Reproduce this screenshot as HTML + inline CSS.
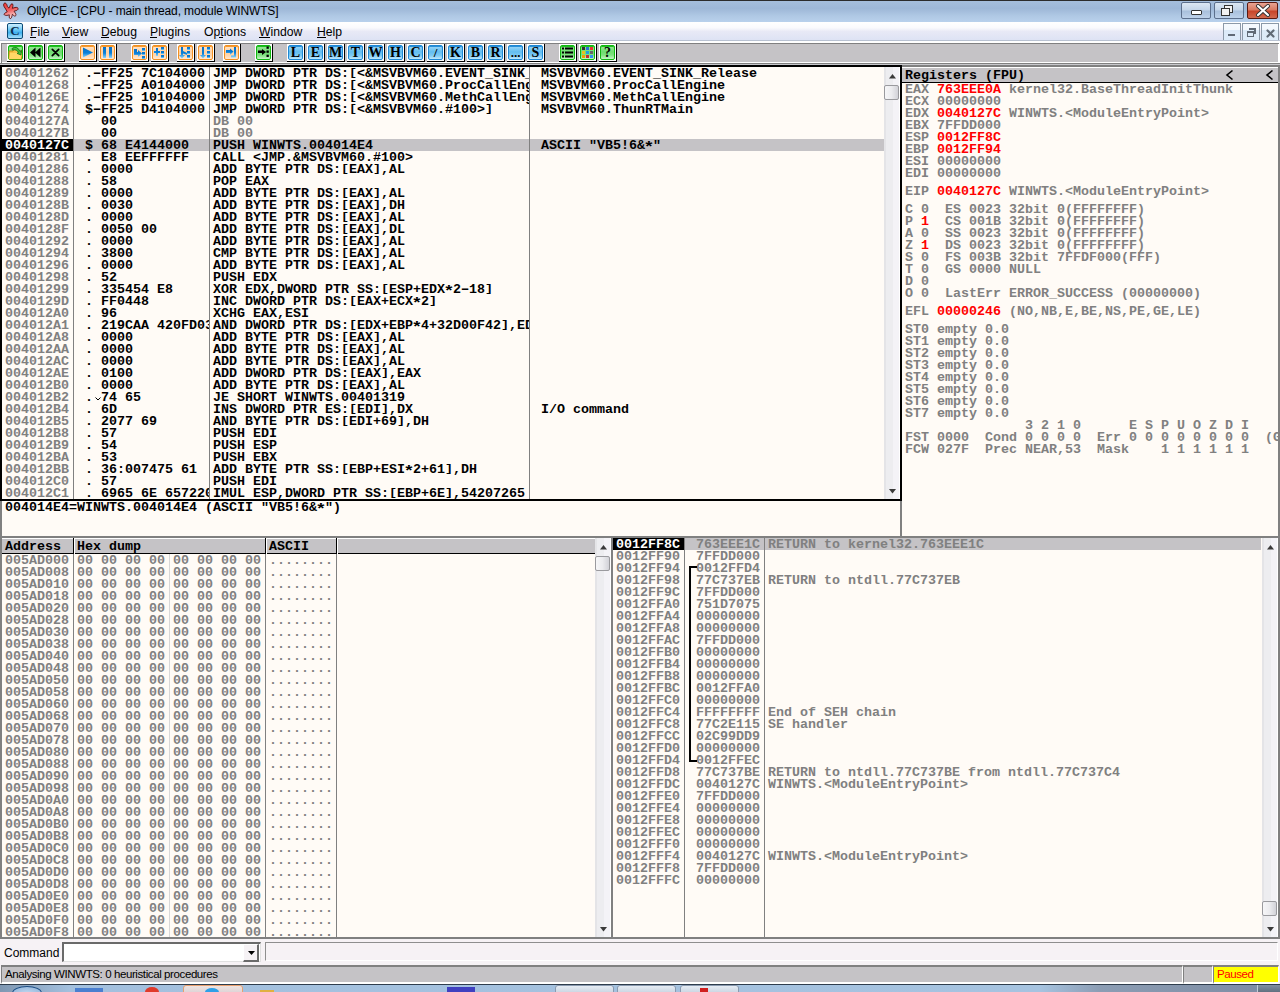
<!DOCTYPE html><html><head><meta charset="utf-8"><style>
*{margin:0;padding:0;box-sizing:border-box}
html,body{width:1280px;height:992px;overflow:hidden;background:#F3F2F7;position:relative}
.a{position:absolute}
.m{font-family:"Liberation Mono",monospace;font-weight:bold;font-size:13.333px;line-height:12px;white-space:pre}
.s{font-family:"Liberation Sans",sans-serif;white-space:pre}
.r{position:absolute;left:0;height:12px;padding-top:1px;margin-left:-1px;white-space:pre}
.g{color:#808080}
.k{color:#000}
.red{color:#F00}
.clip{position:absolute;overflow:hidden}
.vs{position:absolute;width:1px;background:#808080}
.br{display:inline-block;transform:scaleY(0.75);transform-origin:50% 3px}
.as{display:inline-block;transform:translateY(2.5px) scale(1.35,1.1)}
.mi{display:inline-block;transform:scaleX(1.7)}
</style></head><body><div class="a" style="left:0;top:0;width:1280px;height:1px;background:#2b2b2b"></div><div class="a" style="left:0;top:1px;width:1280px;height:21px;background:linear-gradient(#A5BEDC,#9DB7D7 35%,#AFC8E4 70%,#B9D1EC)"></div><div class="a s" style="left:27px;top:3px;font-size:12px;letter-spacing:-0.12px;line-height:16px;color:#000">OllyICE - [CPU - main thread, module WINWTS]</div><div class="a" style="left:1181px;top:2px;width:30px;height:17px;border:1px solid #5C6F8C;border-radius:2px;background:linear-gradient(#DCE7F3,#C4D5E9 45%,#A9C0DC 55%,#BED2EA)"></div><div class="a" style="left:1214px;top:2px;width:30px;height:17px;border:1px solid #5C6F8C;border-radius:2px;background:linear-gradient(#DCE7F3,#C4D5E9 45%,#A9C0DC 55%,#BED2EA)"></div><div class="a" style="left:1247px;top:2px;width:31px;height:17px;border:1px solid #5A1A12;border-radius:2px;background:linear-gradient(#E8A493,#D97A62 45%,#C8452A 55%,#D26A4F)"></div><div class="a" style="left:1191px;top:10px;width:11px;height:5px;background:#fff;border:1px solid #333;border-radius:1px"></div><div class="a" style="left:1224px;top:5px;width:9px;height:8px;border:1px solid #333;background:#f2f2f2"></div><div class="a" style="left:1221px;top:8px;width:9px;height:8px;border:1px solid #333;background:#f2f2f2"></div><svg class="a" style="left:1255px;top:4px" width="16" height="13"><path d="M3 2 L13 11 M13 2 L3 11" stroke="#333" stroke-width="4" stroke-linecap="round"/><path d="M3 2 L13 11 M13 2 L3 11" stroke="#fff" stroke-width="2.2" stroke-linecap="round"/></svg><svg class="a" style="left:1px;top:1px" width="19" height="19" viewBox="0 0 19 19"><defs><linearGradient id="spl" x1="0" y1="0" x2="0.3" y2="1"><stop offset="0" stop-color="#F03838"/><stop offset="0.55" stop-color="#F06060"/><stop offset="1" stop-color="#F8E0E0"/></linearGradient></defs><path d="M3 2.5C4.5 1.2 6 3 6.3 5.5L8 7.2C8.8 5.5 9.5 3 11 2.8C12.5 2.8 12 5.5 11.3 7.3L14 6.5C15.5 6 17.8 6.8 17 8.3C16.3 9.5 14.3 9.8 13 10.2C13.7 11.5 15.5 13 14.8 14.6C14 16 12.5 14.5 11.4 13.3C11 15 10.5 17.8 9.2 17.6C8 17.4 8.2 15.3 8.3 13.8C7 14.3 4.8 14.8 3.5 14C2.5 13.2 3.5 12 6.2 10.8C5.3 8.8 4 7 3.2 5.8C2.6 4.8 2.4 3.2 3 2.5Z" fill="url(#spl)" stroke="#5A0E0E" stroke-width="0.9"/></svg><div class="a" style="left:0;top:22px;width:1280px;height:19px;background:linear-gradient(#FFFFFF,#FAFAFD 30%,#E8E9F6 50%,#DCE2F4)"></div><div class="a" style="left:7px;top:23px;width:16px;height:16px;border:1px solid #0B4A75;border-radius:2px;background:linear-gradient(#CDEFFF,#70CBF6 40%,#3FB0EE 62%,#A8E0FA)"></div><div class="a" style="left:8px;top:23px;width:14px;height:16px;font:bold 13px/16px 'Liberation Serif';color:#0D2F4F;text-align:center">C</div><div class="a s" style="left:30px;top:24px;font-size:12.2px;line-height:16px;color:#000">File</div><div class="a" style="left:30px;top:37px;width:6px;height:1px;background:#000"></div><div class="a s" style="left:62px;top:24px;font-size:12.2px;line-height:16px;color:#000">View</div><div class="a" style="left:62px;top:37px;width:8px;height:1px;background:#000"></div><div class="a s" style="left:101px;top:24px;font-size:12.2px;line-height:16px;color:#000">Debug</div><div class="a" style="left:101px;top:37px;width:8px;height:1px;background:#000"></div><div class="a s" style="left:150px;top:24px;font-size:12.2px;line-height:16px;color:#000">Plugins</div><div class="a" style="left:150px;top:37px;width:7px;height:1px;background:#000"></div><div class="a s" style="left:204px;top:24px;font-size:12.2px;line-height:16px;color:#000">Options</div><div class="a" style="left:219px;top:37px;width:4px;height:1px;background:#000"></div><div class="a s" style="left:259px;top:24px;font-size:12.2px;line-height:16px;color:#000">Window</div><div class="a" style="left:259px;top:37px;width:11px;height:1px;background:#000"></div><div class="a s" style="left:317px;top:24px;font-size:12.2px;line-height:16px;color:#000">Help</div><div class="a" style="left:317px;top:37px;width:9px;height:1px;background:#000"></div><div class="a" style="left:1223px;top:23px;width:18px;height:18px;border:1px solid #8C99A8;background:linear-gradient(#F6FAFE,#F2F7FC 35%,#DCEAF8 40%,#DDEBF9)"></div><div class="a" style="left:1242px;top:23px;width:18px;height:18px;border:1px solid #8C99A8;background:linear-gradient(#F6FAFE,#F2F7FC 35%,#DCEAF8 40%,#DDEBF9)"></div><div class="a" style="left:1261px;top:23px;width:18px;height:18px;border:1px solid #8C99A8;background:linear-gradient(#F6FAFE,#F2F7FC 35%,#DCEAF8 40%,#DDEBF9)"></div><div class="a" style="left:1228px;top:34px;width:7px;height:2px;background:#606A76"></div><div class="a" style="left:1249px;top:28px;width:7px;height:6px;border-top:2px solid #606A76;border-right:2px solid #606A76"></div><div class="a" style="left:1247px;top:31px;width:7px;height:6px;border:1px solid #606A76;border-top-width:2px;background:#DDEBF9"></div><svg class="a" style="left:1265px;top:28px" width="11" height="11"><path d="M2.5 2.5L8.5 8.5M8.5 2.5L2.5 8.5" stroke="#606A76" stroke-width="2.2" stroke-linecap="round"/></svg><div class="a" style="left:0;top:40px;width:1280px;height:1px;background:#B9C2D2"></div><div class="a" style="left:0;top:41px;width:1280px;height:24px;background:#FFFFFF"></div><div class="a" style="left:1px;top:43px;width:1278px;height:1px;background:#808080"></div><div class="a" style="left:1px;top:43px;width:1px;height:21px;background:#808080"></div><div class="a" style="left:2px;top:44px;width:1276px;height:18px;background:#C5C3C6"></div><div class="a" style="left:0;top:63px;width:1280px;height:1px;background:#808080"></div><div class="a" style="left:0;top:64px;width:1280px;height:1px;background:#C8C8CC"></div><div class="a" style="left:7px;top:44px;width:18px;height:18px;background:#fff;border-right:1px solid #000;border-bottom:1px solid #000"></div><div class="a" style="left:8px;top:45px;width:15px;height:15px;border:1px solid #10B810;border-radius:2px;background:linear-gradient(#9CE89C,#6EDC6E 45%,#7FE27F 70%,#C8F3C8);box-shadow:inset 0 1px 0 #20C020"></div><svg class="a" style="left:8px;top:45px" width="15" height="15" viewBox="0 0 15 15"><path d="M1 6h4l1-1.5h3L10 6h3.5v8H1z" fill="#F5C44A" stroke="#C8840C" stroke-width="0.9"/><path d="M2 8h12l-1 6H1z" fill="#FFD866"/><path d="M4 3.5q5-3.5 8 3l1.5-1.2-0.5 4.7-4-1.6 1.6-0.9q-2-3.6-6.2-2.4z" fill="#3CC43C" stroke="#157015" stroke-width="0.8"/></svg><div class="a" style="left:27px;top:44px;width:18px;height:18px;background:#fff;border-right:1px solid #000;border-bottom:1px solid #000"></div><div class="a" style="left:28px;top:45px;width:15px;height:15px;border:1px solid #10B810;border-radius:2px;background:linear-gradient(#9CE89C,#6EDC6E 45%,#7FE27F 70%,#C8F3C8);box-shadow:inset 0 1px 0 #20C020"></div><svg class="a" style="left:28px;top:45px" width="15" height="15" viewBox="0 0 15 15"><path d="M7.5 2.5v10L2 7.5zM12.5 2.5v10L7 7.5z" fill="#000"/></svg><div class="a" style="left:47px;top:44px;width:18px;height:18px;background:#fff;border-right:1px solid #000;border-bottom:1px solid #000"></div><div class="a" style="left:48px;top:45px;width:15px;height:15px;border:1px solid #10B810;border-radius:2px;background:linear-gradient(#9CE89C,#6EDC6E 45%,#7FE27F 70%,#C8F3C8);box-shadow:inset 0 1px 0 #20C020"></div><svg class="a" style="left:48px;top:45px" width="15" height="15" viewBox="0 0 15 15"><path d="M4.3 4.3L10.7 10.7M10.7 4.3L4.3 10.7" stroke="#000" stroke-width="1.7" stroke-linecap="round"/></svg><div class="a" style="left:79px;top:44px;width:18px;height:18px;background:#fff;border-right:1px solid #000;border-bottom:1px solid #000"></div><div class="a" style="left:80px;top:45px;width:15px;height:15px;border:1px solid #F39020;border-radius:2px;background:linear-gradient(#FFE6CC,#FFD2A2 45%,#FFD6AC 70%,#FFE9D4);box-shadow:inset 0 1px 0 #F59A30"></div><svg class="a" style="left:80px;top:45px" width="15" height="15" viewBox="0 0 15 15"><defs><linearGradient id="bg4" x1="0" y1="0" x2="0" y2="1"><stop offset="0" stop-color="#0870C8"/><stop offset="0.55" stop-color="#0A80D8"/><stop offset="1" stop-color="#8AD6FF"/></linearGradient></defs><path d="M3 2.5L13 7.5L3 12.5z" fill="url(#bg4)"/></svg><div class="a" style="left:99px;top:44px;width:18px;height:18px;background:#fff;border-right:1px solid #000;border-bottom:1px solid #000"></div><div class="a" style="left:100px;top:45px;width:15px;height:15px;border:1px solid #F39020;border-radius:2px;background:linear-gradient(#FFE6CC,#FFD2A2 45%,#FFD6AC 70%,#FFE9D4);box-shadow:inset 0 1px 0 #F59A30"></div><svg class="a" style="left:100px;top:45px" width="15" height="15" viewBox="0 0 15 15"><defs><linearGradient id="bg5" x1="0" y1="0" x2="0" y2="1"><stop offset="0" stop-color="#0870C8"/><stop offset="0.55" stop-color="#0A80D8"/><stop offset="1" stop-color="#8AD6FF"/></linearGradient></defs><rect x="3" y="2" width="3" height="11" fill="url(#bg5)"/><rect x="9" y="2" width="3" height="11" fill="url(#bg5)"/></svg><div class="a" style="left:131px;top:44px;width:18px;height:18px;background:#fff;border-right:1px solid #000;border-bottom:1px solid #000"></div><div class="a" style="left:132px;top:45px;width:15px;height:15px;border:1px solid #F39020;border-radius:2px;background:linear-gradient(#FFE6CC,#FFD2A2 45%,#FFD6AC 70%,#FFE9D4);box-shadow:inset 0 1px 0 #F59A30"></div><svg class="a" style="left:132px;top:45px" width="15" height="15" viewBox="0 0 15 15"><defs><linearGradient id="bg6" x1="0" y1="0" x2="0" y2="1"><stop offset="0" stop-color="#0870C8"/><stop offset="0.55" stop-color="#0A80D8"/><stop offset="1" stop-color="#8AD6FF"/></linearGradient></defs><path d="M2 4H5V7H6V5L10 8.5L6 12V10H2Z" fill="url(#bg6)"/><rect x="10" y="3" width="3" height="3" fill="url(#bg6)"/><rect x="10" y="7" width="3" height="3" fill="url(#bg6)"/><rect x="10" y="11" width="3" height="3" fill="url(#bg6)"/></svg><div class="a" style="left:151px;top:44px;width:18px;height:18px;background:#fff;border-right:1px solid #000;border-bottom:1px solid #000"></div><div class="a" style="left:152px;top:45px;width:15px;height:15px;border:1px solid #F39020;border-radius:2px;background:linear-gradient(#FFE6CC,#FFD2A2 45%,#FFD6AC 70%,#FFE9D4);box-shadow:inset 0 1px 0 #F59A30"></div><svg class="a" style="left:152px;top:45px" width="15" height="15" viewBox="0 0 15 15"><defs><linearGradient id="bg7" x1="0" y1="0" x2="0" y2="1"><stop offset="0" stop-color="#0870C8"/><stop offset="0.55" stop-color="#0A80D8"/><stop offset="1" stop-color="#8AD6FF"/></linearGradient></defs><path d="M4 3h2v3h2v2h-2v3h-2V8H2V6h2z" fill="url(#bg7)"/><rect x="9" y="2" width="3" height="3" fill="url(#bg7)"/><rect x="9" y="6" width="3" height="3" fill="url(#bg7)"/><rect x="9" y="10" width="3" height="3" fill="url(#bg7)"/></svg><div class="a" style="left:177px;top:44px;width:18px;height:18px;background:#fff;border-right:1px solid #000;border-bottom:1px solid #000"></div><div class="a" style="left:178px;top:45px;width:15px;height:15px;border:1px solid #F39020;border-radius:2px;background:linear-gradient(#FFE6CC,#FFD2A2 45%,#FFD6AC 70%,#FFE9D4);box-shadow:inset 0 1px 0 #F59A30"></div><svg class="a" style="left:178px;top:45px" width="15" height="15" viewBox="0 0 15 15"><defs><linearGradient id="bg8" x1="0" y1="0" x2="0" y2="1"><stop offset="0" stop-color="#0870C8"/><stop offset="0.55" stop-color="#0A80D8"/><stop offset="1" stop-color="#8AD6FF"/></linearGradient></defs><path d="M3 2h2v4l4 2v2l-4-1.5V10h2l-3 3.5L1 10h2z" fill="url(#bg8)"/><rect x="9" y="2" width="3" height="3" fill="url(#bg8)"/><rect x="9" y="6" width="3" height="3" fill="url(#bg8)"/><rect x="9" y="10" width="3" height="3" fill="url(#bg8)"/></svg><div class="a" style="left:197px;top:44px;width:18px;height:18px;background:#fff;border-right:1px solid #000;border-bottom:1px solid #000"></div><div class="a" style="left:198px;top:45px;width:15px;height:15px;border:1px solid #F39020;border-radius:2px;background:linear-gradient(#FFE6CC,#FFD2A2 45%,#FFD6AC 70%,#FFE9D4);box-shadow:inset 0 1px 0 #F59A30"></div><svg class="a" style="left:198px;top:45px" width="15" height="15" viewBox="0 0 15 15"><defs><linearGradient id="bg9" x1="0" y1="0" x2="0" y2="1"><stop offset="0" stop-color="#0870C8"/><stop offset="0.55" stop-color="#0A80D8"/><stop offset="1" stop-color="#8AD6FF"/></linearGradient></defs><path d="M4 2h2v8h2l-3 3.5L2 10h2z" fill="url(#bg9)"/><rect x="9" y="2" width="3" height="3" fill="url(#bg9)"/><rect x="9" y="6" width="3" height="3" fill="url(#bg9)"/><rect x="9" y="10" width="3" height="3" fill="url(#bg9)"/></svg><div class="a" style="left:223px;top:44px;width:18px;height:18px;background:#fff;border-right:1px solid #000;border-bottom:1px solid #000"></div><div class="a" style="left:224px;top:45px;width:15px;height:15px;border:1px solid #F39020;border-radius:2px;background:linear-gradient(#FFE6CC,#FFD2A2 45%,#FFD6AC 70%,#FFE9D4);box-shadow:inset 0 1px 0 #F59A30"></div><svg class="a" style="left:224px;top:45px" width="15" height="15" viewBox="0 0 15 15"><defs><linearGradient id="bg10" x1="0" y1="0" x2="0" y2="1"><stop offset="0" stop-color="#0870C8"/><stop offset="0.55" stop-color="#0A80D8"/><stop offset="1" stop-color="#8AD6FF"/></linearGradient></defs><path d="M2 5h4V3.5L9.5 6.5L6 10V8H2z" fill="url(#bg10)"/><path d="M10 2h2v10.5H7v-2h3z" fill="url(#bg10)"/></svg><div class="a" style="left:255px;top:44px;width:18px;height:18px;background:#fff;border-right:1px solid #000;border-bottom:1px solid #000"></div><div class="a" style="left:256px;top:45px;width:15px;height:15px;border:1px solid #10B810;border-radius:2px;background:linear-gradient(#9CE89C,#6EDC6E 45%,#7FE27F 70%,#C8F3C8);box-shadow:inset 0 1px 0 #20C020"></div><svg class="a" style="left:256px;top:45px" width="15" height="15" viewBox="0 0 15 15"><path d="M2 5.5h4V4l4 3-4 3V8H2z" fill="#000"/><rect x="10.5" y="1.5" width="2.3" height="2.3" fill="#000"/><rect x="10.5" y="5.5" width="2.3" height="2.3" fill="#000"/><rect x="10.5" y="9.7" width="2.3" height="2.3" fill="#000"/></svg><div class="a" style="left:287px;top:44px;width:18px;height:18px;background:#fff;border-right:1px solid #000;border-bottom:1px solid #000"></div><div class="a" style="left:288px;top:45px;width:15px;height:15px;border:1px solid #1E88D4;border-radius:2px;background:linear-gradient(#9ED8F8,#62BDF0 45%,#7FCBF4 75%,#C0E8FC);box-shadow:inset 0 1px 0 #2A90D8"></div><div class="a" style="left:288px;top:45px;width:15px;height:15px;font:bold 14px/15px 'Liberation Serif';color:#000;text-align:center">L</div><div class="a" style="left:307px;top:44px;width:18px;height:18px;background:#fff;border-right:1px solid #000;border-bottom:1px solid #000"></div><div class="a" style="left:308px;top:45px;width:15px;height:15px;border:1px solid #1E88D4;border-radius:2px;background:linear-gradient(#9ED8F8,#62BDF0 45%,#7FCBF4 75%,#C0E8FC);box-shadow:inset 0 1px 0 #2A90D8"></div><div class="a" style="left:308px;top:45px;width:15px;height:15px;font:bold 14px/15px 'Liberation Serif';color:#000;text-align:center">E</div><div class="a" style="left:327px;top:44px;width:18px;height:18px;background:#fff;border-right:1px solid #000;border-bottom:1px solid #000"></div><div class="a" style="left:328px;top:45px;width:15px;height:15px;border:1px solid #1E88D4;border-radius:2px;background:linear-gradient(#9ED8F8,#62BDF0 45%,#7FCBF4 75%,#C0E8FC);box-shadow:inset 0 1px 0 #2A90D8"></div><div class="a" style="left:328px;top:45px;width:15px;height:15px;font:bold 14px/15px 'Liberation Serif';color:#000;text-align:center">M</div><div class="a" style="left:347px;top:44px;width:18px;height:18px;background:#fff;border-right:1px solid #000;border-bottom:1px solid #000"></div><div class="a" style="left:348px;top:45px;width:15px;height:15px;border:1px solid #1E88D4;border-radius:2px;background:linear-gradient(#9ED8F8,#62BDF0 45%,#7FCBF4 75%,#C0E8FC);box-shadow:inset 0 1px 0 #2A90D8"></div><div class="a" style="left:348px;top:45px;width:15px;height:15px;font:bold 14px/15px 'Liberation Serif';color:#000;text-align:center">T</div><div class="a" style="left:367px;top:44px;width:18px;height:18px;background:#fff;border-right:1px solid #000;border-bottom:1px solid #000"></div><div class="a" style="left:368px;top:45px;width:15px;height:15px;border:1px solid #1E88D4;border-radius:2px;background:linear-gradient(#9ED8F8,#62BDF0 45%,#7FCBF4 75%,#C0E8FC);box-shadow:inset 0 1px 0 #2A90D8"></div><div class="a" style="left:368px;top:45px;width:15px;height:15px;font:bold 14px/15px 'Liberation Serif';color:#000;text-align:center">W</div><div class="a" style="left:387px;top:44px;width:18px;height:18px;background:#fff;border-right:1px solid #000;border-bottom:1px solid #000"></div><div class="a" style="left:388px;top:45px;width:15px;height:15px;border:1px solid #1E88D4;border-radius:2px;background:linear-gradient(#9ED8F8,#62BDF0 45%,#7FCBF4 75%,#C0E8FC);box-shadow:inset 0 1px 0 #2A90D8"></div><div class="a" style="left:388px;top:45px;width:15px;height:15px;font:bold 14px/15px 'Liberation Serif';color:#000;text-align:center">H</div><div class="a" style="left:407px;top:44px;width:18px;height:18px;background:#fff;border-right:1px solid #000;border-bottom:1px solid #000"></div><div class="a" style="left:408px;top:45px;width:15px;height:15px;border:1px solid #1E88D4;border-radius:2px;background:linear-gradient(#9ED8F8,#62BDF0 45%,#7FCBF4 75%,#C0E8FC);box-shadow:inset 0 1px 0 #2A90D8"></div><div class="a" style="left:408px;top:45px;width:15px;height:15px;font:bold 14px/15px 'Liberation Serif';color:#000;text-align:center">C</div><div class="a" style="left:427px;top:44px;width:18px;height:18px;background:#fff;border-right:1px solid #000;border-bottom:1px solid #000"></div><div class="a" style="left:428px;top:45px;width:15px;height:15px;border:1px solid #1E88D4;border-radius:2px;background:linear-gradient(#9ED8F8,#62BDF0 45%,#7FCBF4 75%,#C0E8FC);box-shadow:inset 0 1px 0 #2A90D8"></div><div class="a" style="left:428px;top:45px;width:15px;height:15px;font:bold 13px/15px 'Liberation Serif';color:#000;text-align:center">/</div><div class="a" style="left:447px;top:44px;width:18px;height:18px;background:#fff;border-right:1px solid #000;border-bottom:1px solid #000"></div><div class="a" style="left:448px;top:45px;width:15px;height:15px;border:1px solid #1E88D4;border-radius:2px;background:linear-gradient(#9ED8F8,#62BDF0 45%,#7FCBF4 75%,#C0E8FC);box-shadow:inset 0 1px 0 #2A90D8"></div><div class="a" style="left:448px;top:45px;width:15px;height:15px;font:bold 14px/15px 'Liberation Serif';color:#000;text-align:center">K</div><div class="a" style="left:467px;top:44px;width:18px;height:18px;background:#fff;border-right:1px solid #000;border-bottom:1px solid #000"></div><div class="a" style="left:468px;top:45px;width:15px;height:15px;border:1px solid #1E88D4;border-radius:2px;background:linear-gradient(#9ED8F8,#62BDF0 45%,#7FCBF4 75%,#C0E8FC);box-shadow:inset 0 1px 0 #2A90D8"></div><div class="a" style="left:468px;top:45px;width:15px;height:15px;font:bold 14px/15px 'Liberation Serif';color:#000;text-align:center">B</div><div class="a" style="left:487px;top:44px;width:18px;height:18px;background:#fff;border-right:1px solid #000;border-bottom:1px solid #000"></div><div class="a" style="left:488px;top:45px;width:15px;height:15px;border:1px solid #1E88D4;border-radius:2px;background:linear-gradient(#9ED8F8,#62BDF0 45%,#7FCBF4 75%,#C0E8FC);box-shadow:inset 0 1px 0 #2A90D8"></div><div class="a" style="left:488px;top:45px;width:15px;height:15px;font:bold 14px/15px 'Liberation Serif';color:#000;text-align:center">R</div><div class="a" style="left:507px;top:44px;width:18px;height:18px;background:#fff;border-right:1px solid #000;border-bottom:1px solid #000"></div><div class="a" style="left:508px;top:45px;width:15px;height:15px;border:1px solid #1E88D4;border-radius:2px;background:linear-gradient(#9ED8F8,#62BDF0 45%,#7FCBF4 75%,#C0E8FC);box-shadow:inset 0 1px 0 #2A90D8"></div><div class="a" style="left:508px;top:45px;width:15px;height:15px;font:bold 13px/15px 'Liberation Serif';color:#000;text-align:center">...</div><div class="a" style="left:527px;top:44px;width:18px;height:18px;background:#fff;border-right:1px solid #000;border-bottom:1px solid #000"></div><div class="a" style="left:528px;top:45px;width:15px;height:15px;border:1px solid #1E88D4;border-radius:2px;background:linear-gradient(#9ED8F8,#62BDF0 45%,#7FCBF4 75%,#C0E8FC);box-shadow:inset 0 1px 0 #2A90D8"></div><div class="a" style="left:528px;top:45px;width:15px;height:15px;font:bold 14px/15px 'Liberation Serif';color:#000;text-align:center">S</div><div class="a" style="left:559px;top:44px;width:18px;height:18px;background:#fff;border-right:1px solid #000;border-bottom:1px solid #000"></div><div class="a" style="left:560px;top:45px;width:15px;height:15px;border:1px solid #10B810;border-radius:2px;background:linear-gradient(#9CE89C,#6EDC6E 45%,#7FE27F 70%,#C8F3C8);box-shadow:inset 0 1px 0 #20C020"></div><svg class="a" style="left:560px;top:45px" width="15" height="15" viewBox="0 0 15 15"><rect x="2" y="2.5" width="2" height="2" fill="#000"/><rect x="5" y="2.5" width="8" height="2" fill="#000"/><rect x="2" y="6.5" width="2" height="2" fill="#000"/><rect x="5" y="6.5" width="8" height="2" fill="#000"/><rect x="2" y="10.5" width="2" height="2" fill="#000"/><rect x="5" y="10.5" width="8" height="2" fill="#000"/></svg><div class="a" style="left:579px;top:44px;width:18px;height:18px;background:#fff;border-right:1px solid #000;border-bottom:1px solid #000"></div><div class="a" style="left:580px;top:45px;width:15px;height:15px;border:1px solid #10B810;border-radius:2px;background:linear-gradient(#9CE89C,#6EDC6E 45%,#7FE27F 70%,#C8F3C8);box-shadow:inset 0 1px 0 #20C020"></div><svg class="a" style="left:580px;top:45px" width="15" height="15" viewBox="0 0 15 15"><rect x="2" y="2" width="3" height="3" fill="#333"/><rect x="6" y="2" width="3" height="3" fill="#2a6fd6"/><rect x="10" y="2" width="3" height="3" fill="#e33"/><rect x="2" y="6" width="3" height="3" fill="#e8c020"/><rect x="6" y="6" width="3" height="3" fill="#20a0e0"/><rect x="10" y="6" width="3" height="3" fill="#666"/><rect x="2" y="10" width="3" height="3" fill="#f0a000"/><rect x="6" y="10" width="3" height="3" fill="#c03030"/><rect x="10" y="10" width="3" height="3" fill="#3090f0"/></svg><div class="a" style="left:599px;top:44px;width:18px;height:18px;background:#fff;border-right:1px solid #000;border-bottom:1px solid #000"></div><div class="a" style="left:600px;top:45px;width:15px;height:15px;border:1px solid #10B810;border-radius:2px;background:linear-gradient(#9CE89C,#6EDC6E 45%,#7FE27F 70%,#C8F3C8);box-shadow:inset 0 1px 0 #20C020"></div><div class="a" style="left:600px;top:45px;width:15px;height:15px;font:bold 14px/15px 'Liberation Serif';color:#000;text-align:center">?</div><div class="a" style="left:0px;top:65px;width:902px;height:436px;background:#000;"></div><div class="a" style="left:2px;top:67px;width:898px;height:432px;background:#FFFBF6;"></div><div class="a" style="left:74px;top:139px;width:810px;height:12px;background:#C5C3C6;"></div><div class="a" style="left:2px;top:139px;width:71px;height:12px;background:#000;"></div><div class="a" style="left:73px;top:67px;width:1px;height:432px;background:#808080;"></div><div class="a" style="left:209px;top:67px;width:1px;height:432px;background:#808080;"></div><div class="a" style="left:529px;top:67px;width:1px;height:432px;background:#808080;"></div><div class="clip" style="left:2px;top:67px;width:71px;height:432px"><div class="a m r" style="left:4px;top:0px;color:#808080;">00401262</div><div class="a m r" style="left:4px;top:12px;color:#808080;">00401268</div><div class="a m r" style="left:4px;top:24px;color:#808080;">0040126E</div><div class="a m r" style="left:4px;top:36px;color:#808080;">00401274</div><div class="a m r" style="left:4px;top:48px;color:#808080;">0040127A</div><div class="a m r" style="left:4px;top:60px;color:#808080;">0040127B</div><div class="a m r" style="left:4px;top:72px;color:#FFF;">0040127C</div><div class="a m r" style="left:4px;top:84px;color:#808080;">00401281</div><div class="a m r" style="left:4px;top:96px;color:#808080;">00401286</div><div class="a m r" style="left:4px;top:108px;color:#808080;">00401288</div><div class="a m r" style="left:4px;top:120px;color:#808080;">00401289</div><div class="a m r" style="left:4px;top:132px;color:#808080;">0040128B</div><div class="a m r" style="left:4px;top:144px;color:#808080;">0040128D</div><div class="a m r" style="left:4px;top:156px;color:#808080;">0040128F</div><div class="a m r" style="left:4px;top:168px;color:#808080;">00401292</div><div class="a m r" style="left:4px;top:180px;color:#808080;">00401294</div><div class="a m r" style="left:4px;top:192px;color:#808080;">00401296</div><div class="a m r" style="left:4px;top:204px;color:#808080;">00401298</div><div class="a m r" style="left:4px;top:216px;color:#808080;">00401299</div><div class="a m r" style="left:4px;top:228px;color:#808080;">0040129D</div><div class="a m r" style="left:4px;top:240px;color:#808080;">004012A0</div><div class="a m r" style="left:4px;top:252px;color:#808080;">004012A1</div><div class="a m r" style="left:4px;top:264px;color:#808080;">004012A8</div><div class="a m r" style="left:4px;top:276px;color:#808080;">004012AA</div><div class="a m r" style="left:4px;top:288px;color:#808080;">004012AC</div><div class="a m r" style="left:4px;top:300px;color:#808080;">004012AE</div><div class="a m r" style="left:4px;top:312px;color:#808080;">004012B0</div><div class="a m r" style="left:4px;top:324px;color:#808080;">004012B2</div><div class="a m r" style="left:4px;top:336px;color:#808080;">004012B4</div><div class="a m r" style="left:4px;top:348px;color:#808080;">004012B5</div><div class="a m r" style="left:4px;top:360px;color:#808080;">004012B8</div><div class="a m r" style="left:4px;top:372px;color:#808080;">004012B9</div><div class="a m r" style="left:4px;top:384px;color:#808080;">004012BA</div><div class="a m r" style="left:4px;top:396px;color:#808080;">004012BB</div><div class="a m r" style="left:4px;top:408px;color:#808080;">004012C0</div><div class="a m r" style="left:4px;top:420px;color:#808080;">004012C1</div></div><div class="clip" style="left:74px;top:67px;width:135px;height:432px"><div class="a m r" style="left:4px;top:0px;color:#000;"> .<span class="mi">-</span>FF25 7C104000</div><div class="a m r" style="left:4px;top:12px;color:#000;"> .<span class="mi">-</span>FF25 A0104000</div><div class="a m r" style="left:4px;top:24px;color:#000;"> .<span class="mi">-</span>FF25 10104000</div><div class="a m r" style="left:4px;top:36px;color:#000;"> $<span class="mi">-</span>FF25 D4104000</div><div class="a m r" style="left:4px;top:48px;color:#000;">   00</div><div class="a m r" style="left:4px;top:60px;color:#000;">   00</div><div class="a m r" style="left:4px;top:72px;color:#000;"> $ 68 E4144000</div><div class="a m r" style="left:4px;top:84px;color:#000;"> . E8 EEFFFFFF</div><div class="a m r" style="left:4px;top:96px;color:#000;"> . 0000</div><div class="a m r" style="left:4px;top:108px;color:#000;"> . 58</div><div class="a m r" style="left:4px;top:120px;color:#000;"> . 0000</div><div class="a m r" style="left:4px;top:132px;color:#000;"> . 0030</div><div class="a m r" style="left:4px;top:144px;color:#000;"> . 0000</div><div class="a m r" style="left:4px;top:156px;color:#000;"> . 0050 00</div><div class="a m r" style="left:4px;top:168px;color:#000;"> . 0000</div><div class="a m r" style="left:4px;top:180px;color:#000;"> . 3800</div><div class="a m r" style="left:4px;top:192px;color:#000;"> . 0000</div><div class="a m r" style="left:4px;top:204px;color:#000;"> . 52</div><div class="a m r" style="left:4px;top:216px;color:#000;"> . 335454 E8</div><div class="a m r" style="left:4px;top:228px;color:#000;"> . FF0448</div><div class="a m r" style="left:4px;top:240px;color:#000;"> . 96</div><div class="a m r" style="left:4px;top:252px;color:#000;"> . 219CAA 420FD032</div><div class="a m r" style="left:4px;top:264px;color:#000;"> . 0000</div><div class="a m r" style="left:4px;top:276px;color:#000;"> . 0000</div><div class="a m r" style="left:4px;top:288px;color:#000;"> . 0000</div><div class="a m r" style="left:4px;top:300px;color:#000;"> . 0100</div><div class="a m r" style="left:4px;top:312px;color:#000;"> . 0000</div><div class="a m r" style="left:4px;top:324px;color:#000;"> . 74 65</div><div class="a m r" style="left:4px;top:336px;color:#000;"> . 6D</div><div class="a m r" style="left:4px;top:348px;color:#000;"> . 2077 69</div><div class="a m r" style="left:4px;top:360px;color:#000;"> . 57</div><div class="a m r" style="left:4px;top:372px;color:#000;"> . 54</div><div class="a m r" style="left:4px;top:384px;color:#000;"> . 53</div><div class="a m r" style="left:4px;top:396px;color:#000;"> . 36:007475 61</div><div class="a m r" style="left:4px;top:408px;color:#000;"> . 57</div><div class="a m r" style="left:4px;top:420px;color:#000;"> . 6965 6E 65722065</div></div><svg class="a" style="left:94px;top:394px" width="8" height="8"><path d="M1.5 3.5L4 6L6.5 3.5" stroke="#000" stroke-width="1" fill="none"/></svg><div class="clip" style="left:210px;top:67px;width:319px;height:432px"><div class="a m r" style="left:4px;top:0px;color:#000;">JMP DWORD PTR DS:<span class="br">[</span>&lt;&amp;MSVBVM60.EVENT_SINK_Release&gt;<span class="br">]</span></div><div class="a m r" style="left:4px;top:12px;color:#000;">JMP DWORD PTR DS:<span class="br">[</span>&lt;&amp;MSVBVM60.ProcCallEngine&gt;<span class="br">]</span></div><div class="a m r" style="left:4px;top:24px;color:#000;">JMP DWORD PTR DS:<span class="br">[</span>&lt;&amp;MSVBVM60.MethCallEngine&gt;<span class="br">]</span></div><div class="a m r" style="left:4px;top:36px;color:#000;">JMP DWORD PTR DS:<span class="br">[</span>&lt;&amp;MSVBVM60.#100&gt;<span class="br">]</span></div><div class="a m r" style="left:4px;top:48px;color:#808080;">DB 00</div><div class="a m r" style="left:4px;top:60px;color:#808080;">DB 00</div><div class="a m r" style="left:4px;top:72px;color:#000;">PUSH WINWTS.004014E4</div><div class="a m r" style="left:4px;top:84px;color:#000;">CALL &lt;JMP.&amp;MSVBVM60.#100&gt;</div><div class="a m r" style="left:4px;top:96px;color:#000;">ADD BYTE PTR DS:<span class="br">[</span>EAX<span class="br">]</span>,AL</div><div class="a m r" style="left:4px;top:108px;color:#000;">POP EAX</div><div class="a m r" style="left:4px;top:120px;color:#000;">ADD BYTE PTR DS:<span class="br">[</span>EAX<span class="br">]</span>,AL</div><div class="a m r" style="left:4px;top:132px;color:#000;">ADD BYTE PTR DS:<span class="br">[</span>EAX<span class="br">]</span>,DH</div><div class="a m r" style="left:4px;top:144px;color:#000;">ADD BYTE PTR DS:<span class="br">[</span>EAX<span class="br">]</span>,AL</div><div class="a m r" style="left:4px;top:156px;color:#000;">ADD BYTE PTR DS:<span class="br">[</span>EAX<span class="br">]</span>,DL</div><div class="a m r" style="left:4px;top:168px;color:#000;">ADD BYTE PTR DS:<span class="br">[</span>EAX<span class="br">]</span>,AL</div><div class="a m r" style="left:4px;top:180px;color:#000;">CMP BYTE PTR DS:<span class="br">[</span>EAX<span class="br">]</span>,AL</div><div class="a m r" style="left:4px;top:192px;color:#000;">ADD BYTE PTR DS:<span class="br">[</span>EAX<span class="br">]</span>,AL</div><div class="a m r" style="left:4px;top:204px;color:#000;">PUSH EDX</div><div class="a m r" style="left:4px;top:216px;color:#000;">XOR EDX,DWORD PTR SS:<span class="br">[</span>ESP+EDX<span class="as">*</span>2<span class="mi">-</span>18<span class="br">]</span></div><div class="a m r" style="left:4px;top:228px;color:#000;">INC DWORD PTR DS:<span class="br">[</span>EAX+ECX<span class="as">*</span>2<span class="br">]</span></div><div class="a m r" style="left:4px;top:240px;color:#000;">XCHG EAX,ESI</div><div class="a m r" style="left:4px;top:252px;color:#000;">AND DWORD PTR DS:<span class="br">[</span>EDX+EBP<span class="as">*</span>4+32D00F42<span class="br">]</span>,EDX</div><div class="a m r" style="left:4px;top:264px;color:#000;">ADD BYTE PTR DS:<span class="br">[</span>EAX<span class="br">]</span>,AL</div><div class="a m r" style="left:4px;top:276px;color:#000;">ADD BYTE PTR DS:<span class="br">[</span>EAX<span class="br">]</span>,AL</div><div class="a m r" style="left:4px;top:288px;color:#000;">ADD BYTE PTR DS:<span class="br">[</span>EAX<span class="br">]</span>,AL</div><div class="a m r" style="left:4px;top:300px;color:#000;">ADD DWORD PTR DS:<span class="br">[</span>EAX<span class="br">]</span>,EAX</div><div class="a m r" style="left:4px;top:312px;color:#000;">ADD BYTE PTR DS:<span class="br">[</span>EAX<span class="br">]</span>,AL</div><div class="a m r" style="left:4px;top:324px;color:#000;">JE SHORT WINWTS.00401319</div><div class="a m r" style="left:4px;top:336px;color:#000;">INS DWORD PTR ES:<span class="br">[</span>EDI<span class="br">]</span>,DX</div><div class="a m r" style="left:4px;top:348px;color:#000;">AND BYTE PTR DS:<span class="br">[</span>EDI+69<span class="br">]</span>,DH</div><div class="a m r" style="left:4px;top:360px;color:#000;">PUSH EDI</div><div class="a m r" style="left:4px;top:372px;color:#000;">PUSH ESP</div><div class="a m r" style="left:4px;top:384px;color:#000;">PUSH EBX</div><div class="a m r" style="left:4px;top:396px;color:#000;">ADD BYTE PTR SS:<span class="br">[</span>EBP+ESI<span class="as">*</span>2+61<span class="br">]</span>,DH</div><div class="a m r" style="left:4px;top:408px;color:#000;">PUSH EDI</div><div class="a m r" style="left:4px;top:420px;color:#000;">IMUL ESP,DWORD PTR SS:<span class="br">[</span>EBP+6E<span class="br">]</span>,54207265</div></div><div class="clip" style="left:530px;top:67px;width:354px;height:432px"><div class="a m r" style="left:4px;top:0px;color:#000;"> MSVBVM60.EVENT_SINK_Release</div><div class="a m r" style="left:4px;top:12px;color:#000;"> MSVBVM60.ProcCallEngine</div><div class="a m r" style="left:4px;top:24px;color:#000;"> MSVBVM60.MethCallEngine</div><div class="a m r" style="left:4px;top:36px;color:#000;"> MSVBVM60.ThunRTMain</div><div class="a m r" style="left:4px;top:72px;color:#000;"> ASCII "VB5!6&amp;<span class="as">*</span>"</div><div class="a m r" style="left:4px;top:336px;color:#000;"> I/O command</div></div><div class="a" style="left:884px;top:67px;width:16px;height:432px;background:linear-gradient(90deg,#E4E4E7 0,#E4E4E7 2px,#EDEDF0 2px,#EDEDF0 9px,#F4F3F7 9px,#F4F3F7 15px,#FFFFFF 15px)"></div><svg class="a" style="left:884px;top:67px" width="16" height="16"><path d="M5 11.5L8.5 7L12 11.5z" fill="#3A3A3A"/></svg><svg class="a" style="left:884px;top:483px" width="16" height="16"><path d="M5 6L12 6L8.5 10.5z" fill="#3A3A3A"/></svg><div class="a" style="left:884px;top:85px;width:15px;height:15px;border:1px solid #9A9A9E;border-radius:2px;background:linear-gradient(90deg,#F6F6F8,#ECECEF 50%,#D2D2D8)"></div><div class="a" style="left:0px;top:501px;width:902px;height:36px;background:#808080;"></div><div class="a" style="left:2px;top:501px;width:898px;height:35px;background:#FFFBF6;"></div><div class="a m r" style="left:6px;top:501px;color:#000;">004014E4=WINWTS.004014E4 (ASCII "VB5!6&amp;<span class="as">*</span>")</div><div class="a" style="left:902px;top:65px;width:378px;height:2px;background:#808080;"></div><div class="a" style="left:1278px;top:65px;width:2px;height:873px;background:#808080;"></div><div class="a" style="left:902px;top:67px;width:376px;height:469px;background:#FFFBF6;"></div><div class="a" style="left:902px;top:67px;width:376px;height:1px;background:#FFFFFF;"></div><div class="a" style="left:902px;top:68px;width:376px;height:14px;background:#C5C3C6;"></div><div class="a" style="left:902px;top:82px;width:376px;height:1px;background:#000;"></div><div class="a m r" style="left:906px;top:69px;color:#000;">Registers (FPU)</div><svg class="a" style="left:1224px;top:69px" width="12" height="12"><path d="M8.5 1.5L3 6L8.5 10.5" stroke="#000" stroke-width="1.6" fill="none"/></svg><svg class="a" style="left:1264px;top:69px" width="12" height="12"><path d="M8.5 1.5L3 6L8.5 10.5" stroke="#000" stroke-width="1.6" fill="none"/></svg><div class="clip" style="left:902px;top:67px;width:376px;height:469px"><div class="a m r" style="left:4px;top:16px;color:#808080;">EAX</div><div class="a m r" style="left:36px;top:16px;color:#F00;">763EEE0A</div><div class="a m r" style="left:108px;top:16px;color:#808080;">kernel32.BaseThreadInitThunk</div><div class="a m r" style="left:4px;top:28px;color:#808080;">ECX</div><div class="a m r" style="left:36px;top:28px;color:#808080;">00000000</div><div class="a m r" style="left:108px;top:28px;color:#808080;"></div><div class="a m r" style="left:4px;top:40px;color:#808080;">EDX</div><div class="a m r" style="left:36px;top:40px;color:#F00;">0040127C</div><div class="a m r" style="left:108px;top:40px;color:#808080;">WINWTS.&lt;ModuleEntryPoint&gt;</div><div class="a m r" style="left:4px;top:52px;color:#808080;">EBX</div><div class="a m r" style="left:36px;top:52px;color:#808080;">7FFDD000</div><div class="a m r" style="left:108px;top:52px;color:#808080;"></div><div class="a m r" style="left:4px;top:64px;color:#808080;">ESP</div><div class="a m r" style="left:36px;top:64px;color:#F00;">0012FF8C</div><div class="a m r" style="left:108px;top:64px;color:#808080;"></div><div class="a m r" style="left:4px;top:76px;color:#808080;">EBP</div><div class="a m r" style="left:36px;top:76px;color:#F00;">0012FF94</div><div class="a m r" style="left:108px;top:76px;color:#808080;"></div><div class="a m r" style="left:4px;top:88px;color:#808080;">ESI</div><div class="a m r" style="left:36px;top:88px;color:#808080;">00000000</div><div class="a m r" style="left:108px;top:88px;color:#808080;"></div><div class="a m r" style="left:4px;top:100px;color:#808080;">EDI</div><div class="a m r" style="left:36px;top:100px;color:#808080;">00000000</div><div class="a m r" style="left:108px;top:100px;color:#808080;"></div><div class="a m r" style="left:4px;top:118px;color:#808080;">EIP</div><div class="a m r" style="left:36px;top:118px;color:#F00;">0040127C</div><div class="a m r" style="left:108px;top:118px;color:#808080;">WINWTS.&lt;ModuleEntryPoint&gt;</div><div class="a m r" style="left:4px;top:136px;color:#808080;">C</div><div class="a m r" style="left:20px;top:136px;color:#808080;">0</div><div class="a m r" style="left:44px;top:136px;color:#808080;">ES 0023 32bit 0(FFFFFFFF)</div><div class="a m r" style="left:4px;top:148px;color:#808080;">P</div><div class="a m r" style="left:20px;top:148px;color:#F00;">1</div><div class="a m r" style="left:44px;top:148px;color:#808080;">CS 001B 32bit 0(FFFFFFFF)</div><div class="a m r" style="left:4px;top:160px;color:#808080;">A</div><div class="a m r" style="left:20px;top:160px;color:#808080;">0</div><div class="a m r" style="left:44px;top:160px;color:#808080;">SS 0023 32bit 0(FFFFFFFF)</div><div class="a m r" style="left:4px;top:172px;color:#808080;">Z</div><div class="a m r" style="left:20px;top:172px;color:#F00;">1</div><div class="a m r" style="left:44px;top:172px;color:#808080;">DS 0023 32bit 0(FFFFFFFF)</div><div class="a m r" style="left:4px;top:184px;color:#808080;">S</div><div class="a m r" style="left:20px;top:184px;color:#808080;">0</div><div class="a m r" style="left:44px;top:184px;color:#808080;">FS 003B 32bit 7FFDF000(FFF)</div><div class="a m r" style="left:4px;top:196px;color:#808080;">T</div><div class="a m r" style="left:20px;top:196px;color:#808080;">0</div><div class="a m r" style="left:44px;top:196px;color:#808080;">GS 0000 NULL</div><div class="a m r" style="left:4px;top:208px;color:#808080;">D</div><div class="a m r" style="left:20px;top:208px;color:#808080;">0</div><div class="a m r" style="left:44px;top:208px;color:#808080;"></div><div class="a m r" style="left:4px;top:220px;color:#808080;">O</div><div class="a m r" style="left:20px;top:220px;color:#808080;">0</div><div class="a m r" style="left:44px;top:220px;color:#808080;">LastErr ERROR_SUCCESS (00000000)</div><div class="a m r" style="left:4px;top:238px;color:#808080;">EFL</div><div class="a m r" style="left:36px;top:238px;color:#F00;">00000246</div><div class="a m r" style="left:108px;top:238px;color:#808080;">(NO,NB,E,BE,NS,PE,GE,LE)</div><div class="a m r" style="left:4px;top:256px;color:#808080;">ST0 empty 0.0</div><div class="a m r" style="left:4px;top:268px;color:#808080;">ST1 empty 0.0</div><div class="a m r" style="left:4px;top:280px;color:#808080;">ST2 empty 0.0</div><div class="a m r" style="left:4px;top:292px;color:#808080;">ST3 empty 0.0</div><div class="a m r" style="left:4px;top:304px;color:#808080;">ST4 empty 0.0</div><div class="a m r" style="left:4px;top:316px;color:#808080;">ST5 empty 0.0</div><div class="a m r" style="left:4px;top:328px;color:#808080;">ST6 empty 0.0</div><div class="a m r" style="left:4px;top:340px;color:#808080;">ST7 empty 0.0</div><div class="a m r" style="left:124px;top:352px;color:#808080;">3 2 1 0      E S P U O Z D I</div><div class="a m r" style="left:4px;top:364px;color:#808080;">FST 0000  Cond 0 0 0 0  Err 0 0 0 0 0 0 0 0  (GT)</div><div class="a m r" style="left:4px;top:376px;color:#808080;">FCW 027F  Prec NEAR,53  Mask    1 1 1 1 1 1</div></div><div class="a" style="left:0px;top:536px;width:1280px;height:2px;background:#808080;"></div><div class="a" style="left:0px;top:536px;width:2px;height:402px;background:#808080;"></div><div class="a" style="left:2px;top:538px;width:609px;height:399px;background:#FFFBF6;"></div><div class="a" style="left:2px;top:538px;width:593px;height:1px;background:#FFFFFF;"></div><div class="a" style="left:2px;top:539px;width:593px;height:14px;background:#C5C3C6;"></div><div class="a" style="left:2px;top:553px;width:593px;height:1px;background:#000;"></div><div class="a" style="left:73px;top:538px;width:1px;height:16px;background:#000;"></div><div class="a" style="left:74px;top:538px;width:1px;height:16px;background:#FFFFFF;"></div><div class="a" style="left:265px;top:538px;width:1px;height:16px;background:#000;"></div><div class="a" style="left:266px;top:538px;width:1px;height:16px;background:#FFFFFF;"></div><div class="a" style="left:336px;top:538px;width:1px;height:16px;background:#000;"></div><div class="a" style="left:337px;top:538px;width:1px;height:16px;background:#FFFFFF;"></div><div class="a m r" style="left:6px;top:540px;color:#000;">Address</div><div class="a m r" style="left:78px;top:540px;color:#000;">Hex dump</div><div class="a m r" style="left:270px;top:540px;color:#000;">ASCII</div><div class="a" style="left:73px;top:554px;width:1px;height:383px;background:#808080;"></div><div class="a" style="left:265px;top:554px;width:1px;height:383px;background:#808080;"></div><div class="a" style="left:336px;top:554px;width:1px;height:383px;background:#808080;"></div><div class="a" style="left:169px;top:554px;width:1px;height:383px;background:#D8D8D8;"></div><div class="clip" style="left:2px;top:554px;width:593px;height:383px"><div class="a m r" style="left:4px;top:0px;color:#808080;">005AD000</div><div class="a m r" style="left:76px;top:0px;color:#808080;">00 00 00 00 00 00 00 00</div><div class="a m r" style="left:268px;top:0px;color:#808080;">........</div><div class="a m r" style="left:4px;top:12px;color:#808080;">005AD008</div><div class="a m r" style="left:76px;top:12px;color:#808080;">00 00 00 00 00 00 00 00</div><div class="a m r" style="left:268px;top:12px;color:#808080;">........</div><div class="a m r" style="left:4px;top:24px;color:#808080;">005AD010</div><div class="a m r" style="left:76px;top:24px;color:#808080;">00 00 00 00 00 00 00 00</div><div class="a m r" style="left:268px;top:24px;color:#808080;">........</div><div class="a m r" style="left:4px;top:36px;color:#808080;">005AD018</div><div class="a m r" style="left:76px;top:36px;color:#808080;">00 00 00 00 00 00 00 00</div><div class="a m r" style="left:268px;top:36px;color:#808080;">........</div><div class="a m r" style="left:4px;top:48px;color:#808080;">005AD020</div><div class="a m r" style="left:76px;top:48px;color:#808080;">00 00 00 00 00 00 00 00</div><div class="a m r" style="left:268px;top:48px;color:#808080;">........</div><div class="a m r" style="left:4px;top:60px;color:#808080;">005AD028</div><div class="a m r" style="left:76px;top:60px;color:#808080;">00 00 00 00 00 00 00 00</div><div class="a m r" style="left:268px;top:60px;color:#808080;">........</div><div class="a m r" style="left:4px;top:72px;color:#808080;">005AD030</div><div class="a m r" style="left:76px;top:72px;color:#808080;">00 00 00 00 00 00 00 00</div><div class="a m r" style="left:268px;top:72px;color:#808080;">........</div><div class="a m r" style="left:4px;top:84px;color:#808080;">005AD038</div><div class="a m r" style="left:76px;top:84px;color:#808080;">00 00 00 00 00 00 00 00</div><div class="a m r" style="left:268px;top:84px;color:#808080;">........</div><div class="a m r" style="left:4px;top:96px;color:#808080;">005AD040</div><div class="a m r" style="left:76px;top:96px;color:#808080;">00 00 00 00 00 00 00 00</div><div class="a m r" style="left:268px;top:96px;color:#808080;">........</div><div class="a m r" style="left:4px;top:108px;color:#808080;">005AD048</div><div class="a m r" style="left:76px;top:108px;color:#808080;">00 00 00 00 00 00 00 00</div><div class="a m r" style="left:268px;top:108px;color:#808080;">........</div><div class="a m r" style="left:4px;top:120px;color:#808080;">005AD050</div><div class="a m r" style="left:76px;top:120px;color:#808080;">00 00 00 00 00 00 00 00</div><div class="a m r" style="left:268px;top:120px;color:#808080;">........</div><div class="a m r" style="left:4px;top:132px;color:#808080;">005AD058</div><div class="a m r" style="left:76px;top:132px;color:#808080;">00 00 00 00 00 00 00 00</div><div class="a m r" style="left:268px;top:132px;color:#808080;">........</div><div class="a m r" style="left:4px;top:144px;color:#808080;">005AD060</div><div class="a m r" style="left:76px;top:144px;color:#808080;">00 00 00 00 00 00 00 00</div><div class="a m r" style="left:268px;top:144px;color:#808080;">........</div><div class="a m r" style="left:4px;top:156px;color:#808080;">005AD068</div><div class="a m r" style="left:76px;top:156px;color:#808080;">00 00 00 00 00 00 00 00</div><div class="a m r" style="left:268px;top:156px;color:#808080;">........</div><div class="a m r" style="left:4px;top:168px;color:#808080;">005AD070</div><div class="a m r" style="left:76px;top:168px;color:#808080;">00 00 00 00 00 00 00 00</div><div class="a m r" style="left:268px;top:168px;color:#808080;">........</div><div class="a m r" style="left:4px;top:180px;color:#808080;">005AD078</div><div class="a m r" style="left:76px;top:180px;color:#808080;">00 00 00 00 00 00 00 00</div><div class="a m r" style="left:268px;top:180px;color:#808080;">........</div><div class="a m r" style="left:4px;top:192px;color:#808080;">005AD080</div><div class="a m r" style="left:76px;top:192px;color:#808080;">00 00 00 00 00 00 00 00</div><div class="a m r" style="left:268px;top:192px;color:#808080;">........</div><div class="a m r" style="left:4px;top:204px;color:#808080;">005AD088</div><div class="a m r" style="left:76px;top:204px;color:#808080;">00 00 00 00 00 00 00 00</div><div class="a m r" style="left:268px;top:204px;color:#808080;">........</div><div class="a m r" style="left:4px;top:216px;color:#808080;">005AD090</div><div class="a m r" style="left:76px;top:216px;color:#808080;">00 00 00 00 00 00 00 00</div><div class="a m r" style="left:268px;top:216px;color:#808080;">........</div><div class="a m r" style="left:4px;top:228px;color:#808080;">005AD098</div><div class="a m r" style="left:76px;top:228px;color:#808080;">00 00 00 00 00 00 00 00</div><div class="a m r" style="left:268px;top:228px;color:#808080;">........</div><div class="a m r" style="left:4px;top:240px;color:#808080;">005AD0A0</div><div class="a m r" style="left:76px;top:240px;color:#808080;">00 00 00 00 00 00 00 00</div><div class="a m r" style="left:268px;top:240px;color:#808080;">........</div><div class="a m r" style="left:4px;top:252px;color:#808080;">005AD0A8</div><div class="a m r" style="left:76px;top:252px;color:#808080;">00 00 00 00 00 00 00 00</div><div class="a m r" style="left:268px;top:252px;color:#808080;">........</div><div class="a m r" style="left:4px;top:264px;color:#808080;">005AD0B0</div><div class="a m r" style="left:76px;top:264px;color:#808080;">00 00 00 00 00 00 00 00</div><div class="a m r" style="left:268px;top:264px;color:#808080;">........</div><div class="a m r" style="left:4px;top:276px;color:#808080;">005AD0B8</div><div class="a m r" style="left:76px;top:276px;color:#808080;">00 00 00 00 00 00 00 00</div><div class="a m r" style="left:268px;top:276px;color:#808080;">........</div><div class="a m r" style="left:4px;top:288px;color:#808080;">005AD0C0</div><div class="a m r" style="left:76px;top:288px;color:#808080;">00 00 00 00 00 00 00 00</div><div class="a m r" style="left:268px;top:288px;color:#808080;">........</div><div class="a m r" style="left:4px;top:300px;color:#808080;">005AD0C8</div><div class="a m r" style="left:76px;top:300px;color:#808080;">00 00 00 00 00 00 00 00</div><div class="a m r" style="left:268px;top:300px;color:#808080;">........</div><div class="a m r" style="left:4px;top:312px;color:#808080;">005AD0D0</div><div class="a m r" style="left:76px;top:312px;color:#808080;">00 00 00 00 00 00 00 00</div><div class="a m r" style="left:268px;top:312px;color:#808080;">........</div><div class="a m r" style="left:4px;top:324px;color:#808080;">005AD0D8</div><div class="a m r" style="left:76px;top:324px;color:#808080;">00 00 00 00 00 00 00 00</div><div class="a m r" style="left:268px;top:324px;color:#808080;">........</div><div class="a m r" style="left:4px;top:336px;color:#808080;">005AD0E0</div><div class="a m r" style="left:76px;top:336px;color:#808080;">00 00 00 00 00 00 00 00</div><div class="a m r" style="left:268px;top:336px;color:#808080;">........</div><div class="a m r" style="left:4px;top:348px;color:#808080;">005AD0E8</div><div class="a m r" style="left:76px;top:348px;color:#808080;">00 00 00 00 00 00 00 00</div><div class="a m r" style="left:268px;top:348px;color:#808080;">........</div><div class="a m r" style="left:4px;top:360px;color:#808080;">005AD0F0</div><div class="a m r" style="left:76px;top:360px;color:#808080;">00 00 00 00 00 00 00 00</div><div class="a m r" style="left:268px;top:360px;color:#808080;">........</div><div class="a m r" style="left:4px;top:372px;color:#808080;">005AD0F8</div><div class="a m r" style="left:76px;top:372px;color:#808080;">00 00 00 00 00 00 00 00</div><div class="a m r" style="left:268px;top:372px;color:#808080;">........</div></div><div class="a" style="left:595px;top:538px;width:16px;height:399px;background:linear-gradient(90deg,#E4E4E7 0,#E4E4E7 2px,#EDEDF0 2px,#EDEDF0 9px,#F4F3F7 9px,#F4F3F7 15px,#FFFFFF 15px)"></div><svg class="a" style="left:595px;top:538px" width="16" height="16"><path d="M5 11.5L8.5 7L12 11.5z" fill="#3A3A3A"/></svg><svg class="a" style="left:595px;top:921px" width="16" height="16"><path d="M5 6L12 6L8.5 10.5z" fill="#3A3A3A"/></svg><div class="a" style="left:595px;top:556px;width:15px;height:15px;border:1px solid #9A9A9E;border-radius:2px;background:linear-gradient(90deg,#F6F6F8,#ECECEF 50%,#D2D2D8)"></div><div class="a" style="left:611px;top:536px;width:2px;height:402px;background:#808080;"></div><div class="a" style="left:613px;top:538px;width:665px;height:399px;background:#FFFBF6;"></div><div class="a" style="left:685px;top:538px;width:576px;height:12px;background:#C5C3C6;"></div><div class="a" style="left:613px;top:538px;width:71px;height:12px;background:#000;"></div><div class="a" style="left:684px;top:538px;width:1px;height:399px;background:#808080;"></div><div class="a" style="left:764px;top:538px;width:1px;height:399px;background:#808080;"></div><div class="a m r" style="left:617px;top:538px;color:#FFF;">0012FF8C</div><div class="a m r" style="left:697px;top:538px;color:#808080;">763EEE1C</div><div class="a m r" style="left:769px;top:538px;color:#808080;">RETURN to kernel32.763EEE1C</div><div class="a m r" style="left:617px;top:550px;color:#808080;">0012FF90</div><div class="a m r" style="left:697px;top:550px;color:#808080;">7FFDD000</div><div class="a m r" style="left:617px;top:562px;color:#808080;">0012FF94</div><div class="a m r" style="left:697px;top:562px;color:#808080;">0012FFD4</div><div class="a m r" style="left:617px;top:574px;color:#808080;">0012FF98</div><div class="a m r" style="left:697px;top:574px;color:#808080;">77C737EB</div><div class="a m r" style="left:769px;top:574px;color:#808080;">RETURN to ntdll.77C737EB</div><div class="a m r" style="left:617px;top:586px;color:#808080;">0012FF9C</div><div class="a m r" style="left:697px;top:586px;color:#808080;">7FFDD000</div><div class="a m r" style="left:617px;top:598px;color:#808080;">0012FFA0</div><div class="a m r" style="left:697px;top:598px;color:#808080;">751D7075</div><div class="a m r" style="left:617px;top:610px;color:#808080;">0012FFA4</div><div class="a m r" style="left:697px;top:610px;color:#808080;">00000000</div><div class="a m r" style="left:617px;top:622px;color:#808080;">0012FFA8</div><div class="a m r" style="left:697px;top:622px;color:#808080;">00000000</div><div class="a m r" style="left:617px;top:634px;color:#808080;">0012FFAC</div><div class="a m r" style="left:697px;top:634px;color:#808080;">7FFDD000</div><div class="a m r" style="left:617px;top:646px;color:#808080;">0012FFB0</div><div class="a m r" style="left:697px;top:646px;color:#808080;">00000000</div><div class="a m r" style="left:617px;top:658px;color:#808080;">0012FFB4</div><div class="a m r" style="left:697px;top:658px;color:#808080;">00000000</div><div class="a m r" style="left:617px;top:670px;color:#808080;">0012FFB8</div><div class="a m r" style="left:697px;top:670px;color:#808080;">00000000</div><div class="a m r" style="left:617px;top:682px;color:#808080;">0012FFBC</div><div class="a m r" style="left:697px;top:682px;color:#808080;">0012FFA0</div><div class="a m r" style="left:617px;top:694px;color:#808080;">0012FFC0</div><div class="a m r" style="left:697px;top:694px;color:#808080;">00000000</div><div class="a m r" style="left:617px;top:706px;color:#808080;">0012FFC4</div><div class="a m r" style="left:697px;top:706px;color:#808080;">FFFFFFFF</div><div class="a m r" style="left:769px;top:706px;color:#808080;">End of SEH chain</div><div class="a m r" style="left:617px;top:718px;color:#808080;">0012FFC8</div><div class="a m r" style="left:697px;top:718px;color:#808080;">77C2E115</div><div class="a m r" style="left:769px;top:718px;color:#808080;">SE handler</div><div class="a m r" style="left:617px;top:730px;color:#808080;">0012FFCC</div><div class="a m r" style="left:697px;top:730px;color:#808080;">02C99DD9</div><div class="a m r" style="left:617px;top:742px;color:#808080;">0012FFD0</div><div class="a m r" style="left:697px;top:742px;color:#808080;">00000000</div><div class="a m r" style="left:617px;top:754px;color:#808080;">0012FFD4</div><div class="a m r" style="left:697px;top:754px;color:#808080;">0012FFEC</div><div class="a m r" style="left:617px;top:766px;color:#808080;">0012FFD8</div><div class="a m r" style="left:697px;top:766px;color:#808080;">77C737BE</div><div class="a m r" style="left:769px;top:766px;color:#808080;">RETURN to ntdll.77C737BE from ntdll.77C737C4</div><div class="a m r" style="left:617px;top:778px;color:#808080;">0012FFDC</div><div class="a m r" style="left:697px;top:778px;color:#808080;">0040127C</div><div class="a m r" style="left:769px;top:778px;color:#808080;">WINWTS.&lt;ModuleEntryPoint&gt;</div><div class="a m r" style="left:617px;top:790px;color:#808080;">0012FFE0</div><div class="a m r" style="left:697px;top:790px;color:#808080;">7FFDD000</div><div class="a m r" style="left:617px;top:802px;color:#808080;">0012FFE4</div><div class="a m r" style="left:697px;top:802px;color:#808080;">00000000</div><div class="a m r" style="left:617px;top:814px;color:#808080;">0012FFE8</div><div class="a m r" style="left:697px;top:814px;color:#808080;">00000000</div><div class="a m r" style="left:617px;top:826px;color:#808080;">0012FFEC</div><div class="a m r" style="left:697px;top:826px;color:#808080;">00000000</div><div class="a m r" style="left:617px;top:838px;color:#808080;">0012FFF0</div><div class="a m r" style="left:697px;top:838px;color:#808080;">00000000</div><div class="a m r" style="left:617px;top:850px;color:#808080;">0012FFF4</div><div class="a m r" style="left:697px;top:850px;color:#808080;">0040127C</div><div class="a m r" style="left:769px;top:850px;color:#808080;">WINWTS.&lt;ModuleEntryPoint&gt;</div><div class="a m r" style="left:617px;top:862px;color:#808080;">0012FFF8</div><div class="a m r" style="left:697px;top:862px;color:#808080;">7FFDD000</div><div class="a m r" style="left:617px;top:874px;color:#808080;">0012FFFC</div><div class="a m r" style="left:697px;top:874px;color:#808080;">00000000</div><div class="a" style="left:689px;top:566px;width:2px;height:196px;background:#000;"></div><div class="a" style="left:689px;top:566px;width:8px;height:2px;background:#000;"></div><div class="a" style="left:689px;top:760px;width:8px;height:2px;background:#000;"></div><div class="a" style="left:1262px;top:538px;width:16px;height:399px;background:linear-gradient(90deg,#E4E4E7 0,#E4E4E7 2px,#EDEDF0 2px,#EDEDF0 9px,#F4F3F7 9px,#F4F3F7 15px,#FFFFFF 15px)"></div><svg class="a" style="left:1262px;top:538px" width="16" height="16"><path d="M5 11.5L8.5 7L12 11.5z" fill="#3A3A3A"/></svg><svg class="a" style="left:1262px;top:921px" width="16" height="16"><path d="M5 6L12 6L8.5 10.5z" fill="#3A3A3A"/></svg><div class="a" style="left:1262px;top:901px;width:15px;height:15px;border:1px solid #9A9A9E;border-radius:2px;background:linear-gradient(90deg,#F6F6F8,#ECECEF 50%,#D2D2D8)"></div><div class="a" style="left:0px;top:937px;width:1280px;height:2px;background:#808080;"></div><div class="a" style="left:0px;top:939px;width:1280px;height:26px;background:#F6F2F5;"></div><div class="a s" style="left:4px;top:945px;font-size:12px;line-height:16px;color:#000">Command</div><div class="a" style="left:62px;top:942px;width:199px;height:20px;background:#fff;border-top:2px solid #6A6A6A;border-left:2px solid #6A6A6A;border-right:1px solid #E0E0E0;border-bottom:1px solid #E0E0E0"></div><div class="a" style="left:243px;top:944px;width:16px;height:18px;background:#F6F2F5;border-left:1px solid #FFFFFF;border-top:1px solid #FFFFFF;border-right:2px solid #6A6A6A;border-bottom:2px solid #6A6A6A"></div><svg class="a" style="left:243px;top:944px" width="16" height="16"><path d="M5 7h7L8.5 11z" fill="#000"/></svg><div class="a" style="left:265px;top:942px;width:1013px;height:19px;border-top:1px solid #8E8E8E;border-left:1px solid #8E8E8E;border-bottom:1px solid #FFF;border-right:1px solid #FFF;background:#F6F2F5"></div><div class="a" style="left:0px;top:965px;width:1280px;height:19px;background:#F6F2F5;"></div><div class="a" style="left:1px;top:965px;width:1182px;height:19px;background:#C5C3C6;border-top:2px solid #808080;border-left:1px solid #808080;border-bottom:2px solid #FFF;border-right:1px solid #FFF"></div><div class="a" style="left:1183px;top:965px;width:30px;height:19px;background:#C5C3C6;border-top:2px solid #808080;border-left:1px solid #808080;border-bottom:2px solid #FFF;border-right:1px solid #FFF"></div><div class="a" style="left:1213px;top:965px;width:66px;height:19px;background:#FFFF00;border-top:2px solid #808080;border-left:1px solid #808080;border-bottom:2px solid #FFF;border-right:1px solid #FFF"></div><div class="a s" style="left:5px;top:966px;font-size:11.5px;letter-spacing:-0.4px;line-height:16px;color:#000">Analysing WINWTS: 0 heuristical procedures</div><div class="a s" style="left:1217px;top:966px;font-size:11.5px;letter-spacing:-0.4px;line-height:16px;color:#F00">Paused</div><div class="a" style="left:0;top:984px;width:1280px;height:8px;background:linear-gradient(90deg,#7F97B2 0,#A3C0DE 70px,#A6C3E0 1040px,#8C9DB4 1100px,#7F8EA5 1250px)"></div><div class="a" style="left:0px;top:984px;width:1280px;height:1px;background:#2F3D4D;"></div><div class="a" style="left:12px;top:986px;width:30px;height:14px;border-radius:50%;border:1px solid #1E4F86;background:radial-gradient(#BFD6EE,#8DB1D8)"></div><div class="a" style="left:75px;top:988px;width:28px;height:4px;background:#4A7FD0;"></div><div class="a" style="left:145px;top:987px;width:14px;height:10px;border-radius:50%;background:#E03A2A"></div><div class="a" style="left:183px;top:985px;width:60px;height:10px;border:1px solid #E8A070;border-radius:3px;background:linear-gradient(#F0E4E0,#D8D0D4)"></div><div class="a" style="left:205px;top:988px;width:14px;height:8px;border-radius:50%;background:#2FA0E8"></div><div class="a" style="left:260px;top:990px;width:14px;height:2px;background:#E0B040;"></div><div class="a" style="left:447px;top:987px;width:28px;height:5px;background:#4040C0;"></div><div class="a" style="left:555px;top:985px;width:59px;height:10px;border:1px solid #8A9AB0;border-radius:3px;background:linear-gradient(#E6ECF4,#C4D0DE)"></div><div class="a" style="left:617px;top:985px;width:59px;height:10px;border:1px solid #8A9AB0;border-radius:3px;background:linear-gradient(#E6ECF4,#C4D0DE)"></div><div class="a" style="left:680px;top:985px;width:59px;height:10px;border:1px solid #8A9AB0;border-radius:3px;background:linear-gradient(#E6ECF4,#C4D0DE)"></div><div class="a" style="left:700px;top:988px;width:8px;height:4px;background:#D02020;"></div><div class="a" style="left:1257px;top:985px;width:23px;height:7px;border-left:1px solid #C0CCD8;background:linear-gradient(#8090A0,#607080)"></div></body></html>
